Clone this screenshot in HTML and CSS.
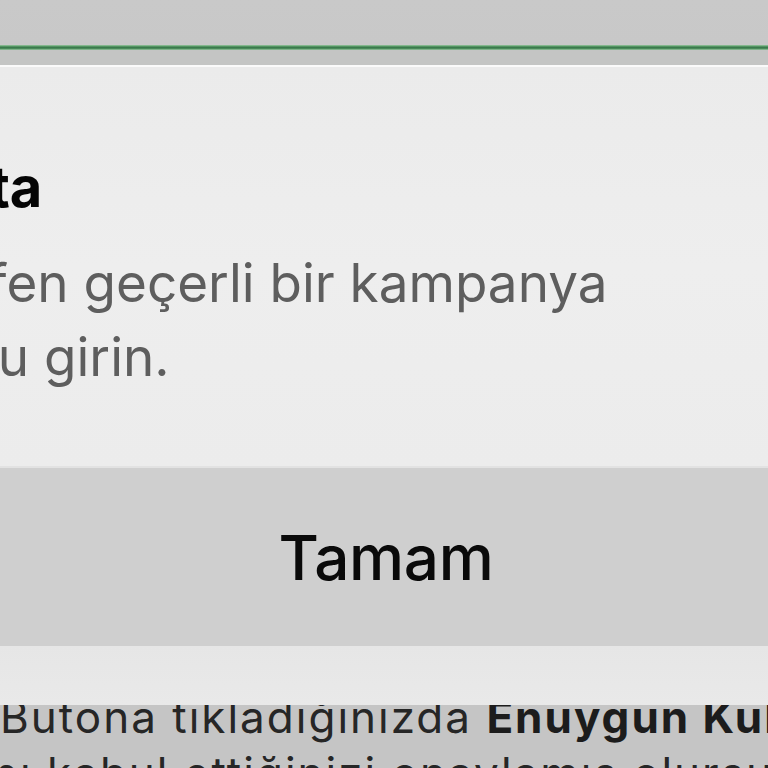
FILE: index.html
```html
<!DOCTYPE html>
<html lang="tr">
<head>
<meta charset="utf-8">
<title>Hata</title>
<link rel="stylesheet" href="styles.css">
</head>
<body>
<div class="screen">
  <div class="topbar"></div>
  <div class="progress"></div>
  <div class="subbar"></div>
  <div class="alert">
    <div class="alert-body">
      <div class="alert-title">Hata</div>
      <div class="alert-message">
        <span class="line line-1">Lütfen geçerli bir kampanya</span>
        <span class="line line-2">kodunu girin.</span>
      </div>
    </div>
    <div class="alert-action">Tamam</div>
    <div class="alert-foot"></div>
  </div>
  <div class="page-text">
    <span class="line line-a">Butona tıkladığınızda <b>Enuygun Kullanım Koşulları</b></span>
    <span class="line line-b">nı kabul ettiğinizi onaylamış olursunuz.</span>
  </div>
</div>
</body>
</html>
```

FILE: styles.css
```css
html, body {
  margin: 0;
  padding: 0;
}
body {
  width: 768px;
  height: 768px;
  overflow: hidden;
  background: #c5c5c5;
  font-family: Inter, "Noto Sans", "Liberation Sans", sans-serif;
}
.screen {
  width: 768px;
  height: 768px;
  overflow: hidden;
}
.topbar {
  height: 45px;
  background: linear-gradient(#c9c9c9, #c8c8c8);
}
.progress {
  height: 5px;
  background: linear-gradient(#9fcba6 0%, #5a9a68 25%, #3a7a4c 50%, #4e8d5d 75%, #a3cdaa 100%);
}
.subbar {
  height: 15px;
  background: #c4c5c4;
  border-bottom: 2px solid #fafafa;
}
.alert {
  position: relative;
  z-index: 1;
  display: flex;
  flex-direction: column;
}
.alert-body {
  flex: none;
  height: 401px;
  box-sizing: border-box;
  padding-top: 86px;
  background: linear-gradient(#ebebeb, #eeeeee 50%, #ececec);
  border-bottom: 2px solid #e2e2e2;
  white-space: nowrap;
}
.alert-title {
  font-size: 56px;
  line-height: 68px;
  font-weight: 700;
  color: #050505;
  margin-left: -84px;
  letter-spacing: -0.5px;
}
.alert-message {
  margin-top: 25px;
  font-size: 53px;
  line-height: 74px;
  font-weight: 400;
  color: #5e5e5e;
}
.line {
  display: block;
}
.line-1 {
  margin-left: -89px;
}
.line-2 {
  margin-left: -157px;
}
.alert-action {
  flex: none;
  height: 178px;
  box-sizing: border-box;
  padding-top: 52px;
  background: #cfcfcf;
  text-align: center;
  font-size: 62px;
  line-height: 76px;
  font-weight: 500;
  color: #0a0a0a;
  padding-left: 4px;
  letter-spacing: -0.3px;
}
.alert-foot {
  flex: none;
  height: 59px;
  background: linear-gradient(#e6e6e6, #e9e9e9);
}
.page-text {
  margin-top: -16px;
  font-size: 44px;
  line-height: 56px;
  letter-spacing: 2px;
  color: #262626;
  white-space: nowrap;
}
.page-text b {
  font-weight: 700;
  color: #1c1c1c;
}
.line-a {
  margin-left: 0;
}
.line-b {
  margin-left: -8px;
}
```
